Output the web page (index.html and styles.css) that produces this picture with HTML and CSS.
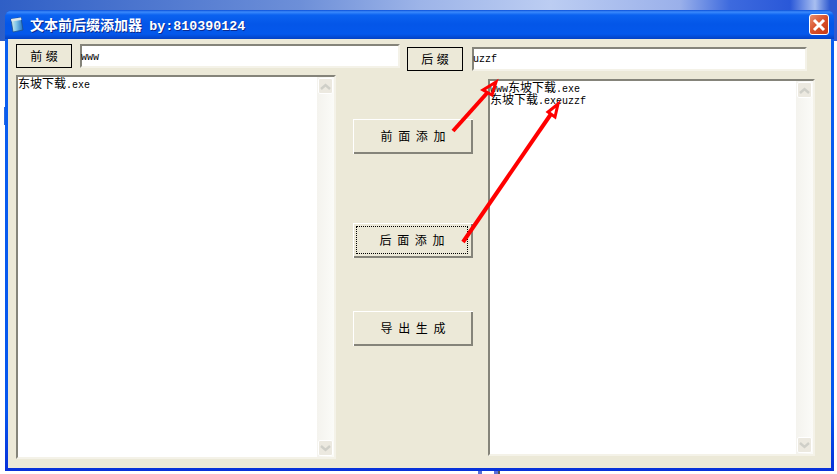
FILE: index.html
```html
<!DOCTYPE html>
<html lang="zh">
<head>
    <meta charset="UTF-8">
    <title>文本前后缀添加器</title>
    <link rel="stylesheet" href="styles.css">
</head>
<body>
    <!-- bits of the desktop showing round the window -->
    <div class="bit bit-left"></div>
    <div class="bit bit-bottom-a"></div>
    <div class="bit bit-bottom-b"></div>

    <div class="window">
        <div class="titlebar">
            <svg class="app-icon" width="16" height="17" viewBox="0 0 16 17">
                <defs>
                    <linearGradient id="page" x1="0" y1="0" x2="1" y2="0">
                        <stop offset="0" stop-color="#d8efe8"/>
                        <stop offset="0.45" stop-color="#7fc4e8"/>
                        <stop offset="1" stop-color="#1f6fc0"/>
                    </linearGradient>
                </defs>
                <path d="M2 3 L12 1.5 L14 14 L4 16 Z" fill="url(#page)" stroke="#1d4f90" stroke-width="0.8"/>
                <path d="M2 3 L12 1.5 L12.4 4 L2.5 5.5 Z" fill="#dfe6ea"/>
            </svg>
            <span class="title-text">文本前后缀添加器 <span class="title-by">by:810390124</span></span>
            <div class="close-btn">
                <svg width="14" height="14" viewBox="0 0 14 14">
                    <path d="M2 2 L12 12 M12 2 L2 12" stroke="#fff" stroke-width="3"/>
                </svg>
            </div>
        </div>
        <div class="client">
            <div class="top-row">
                <div class="field-left">
                    <button class="label-btn">前 缀</button>
                    <div class="input-box">www</div>
                </div>
                <div class="field-right">
                    <button class="label-btn">后 缀</button>
                    <div class="input-box">uzzf</div>
                </div>
            </div>
            <div class="main-row">
                <div class="memo memo-left">
                    <div class="memo-text">东坡下载<span class="latin">.exe</span></div>
                    <div class="scrollbar">
                        <div class="scroll-btn"><svg width="11" height="7" viewBox="0 0 11 7"><path d="M1 6 L5.5 2 L10 6" fill="none" stroke="#cfcfc8" stroke-width="2.4"/></svg></div>
                        <div class="scroll-btn"><svg width="11" height="7" viewBox="0 0 11 7"><path d="M1 1 L5.5 5 L10 1" fill="none" stroke="#cfcfc8" stroke-width="2.4"/></svg></div>
                    </div>
                </div>
                <div class="actions">
                    <button class="action-btn">前 面 添 加</button>
                    <button class="action-btn focused"><span class="focus-ring">后 面 添 加</span></button>
                    <button class="action-btn">导 出 生 成</button>
                </div>
                <div class="memo memo-right">
                    <div class="memo-text"><span class="latin">www</span>东坡下载<span class="latin">.exe</span><br>东坡下载<span class="latin">.exeuzzf</span></div>
                    <div class="scrollbar">
                        <div class="scroll-btn"><svg width="11" height="7" viewBox="0 0 11 7"><path d="M1 6 L5.5 2 L10 6" fill="none" stroke="#cfcfc8" stroke-width="2.4"/></svg></div>
                        <div class="scroll-btn"><svg width="11" height="7" viewBox="0 0 11 7"><path d="M1 1 L5.5 5 L10 1" fill="none" stroke="#cfcfc8" stroke-width="2.4"/></svg></div>
                    </div>
                </div>
            </div>
        </div>
    </div>

    <!-- red arrows drawn over the window -->
    <svg class="arrows" width="837" height="474" viewBox="0 0 837 474">
        <path d="M453 131 L488 92" stroke="#f00" stroke-width="4" fill="none"/>
        <path d="M496 82 L483 90 L492 95 Z" fill="none" stroke="#f00" stroke-width="3"/>
        <path d="M463 242 L551 114" stroke="#f00" stroke-width="4" fill="none"/>
        <path d="M558 104 L548 112 L555 117 Z" fill="none" stroke="#f00" stroke-width="3"/>
    </svg>
</body>
</html>
```

FILE: styles.css
```css
html, body {
    margin: 0;
    height: 100%;
}
body {
    width: 837px;
    height: 474px;
    overflow: hidden;
    position: relative;
    background: linear-gradient(to right, #2f5fc6 0, #6d8fd8 300px, #9db4e8 420px, #bccdf2 550px, #9ab0ea 680px, #3d6ade 730px, #2a58d8 790px, #a9bff0 815px, #2f5ad0 830px) 0 0 / 100% 41px no-repeat, #fff;
    font-family: "Liberation Mono", "Noto Sans CJK SC", monospace;
}
.bit {
    position: absolute;
}
.bit-left {
    left: 4px;
    top: 107px;
    width: 1px;
    height: 18px;
    background: #2a6ae0;
}
.bit-bottom-a {
    left: 478px;
    top: 471px;
    width: 4px;
    height: 3px;
    background: #5b70d8;
}
.bit-bottom-b {
    left: 494px;
    top: 471px;
    width: 4px;
    height: 3px;
    background: #5b70d8;
    border-right: 2px solid #555;
}
.window {
    position: absolute;
    left: 5px;
    top: 10px;
    width: 829px;
    height: 461px;
    display: flex;
    flex-direction: column;
    border-radius: 8px 8px 0 0;
    box-sizing: border-box;
    padding: 0 3px 3px;
    background: linear-gradient(to bottom, #0a5ff0, #0556ee 400px, #0831d9);
}
.titlebar {
    height: 29px;
    margin: 0 -3px;
    padding: 0 5px 0 4px;
    display: flex;
    align-items: center;
    border-radius: 8px 8px 0 0;
    background: linear-gradient(to bottom, #0a4fd8 0, #3b8afc 2px, #0a62f0 5px, #0456e8 14px, #0458ec 24px, #0441c4 29px);
}
.app-icon {
    margin-right: 5px;
}
.title-text {
    flex: 1;
    color: #fff;
    font-weight: bold;
    font-size: 14px;
    padding-bottom: 2px;
    text-shadow: 1px 1px 0 #0a2a90;
    font-family: "Noto Sans CJK SC", sans-serif;
    white-space: pre;
}
.title-by {
    font-family: "Liberation Mono", monospace;
    font-size: 13.33px;
    margin-left: 4px;
}
.close-btn {
    width: 20px;
    height: 21px;
    box-sizing: border-box;
    border: 1px solid #fff;
    border-radius: 3px;
    background: linear-gradient(135deg, #ea9070, #d8502a 50%, #c83a14);
    display: flex;
    align-items: center;
    justify-content: center;
}
.client {
    flex: 1;
    background: #ece9d8;
    display: flex;
    flex-direction: column;
    padding: 5px 14px 8px 8px;
    min-height: 0;
}
.top-row {
    display: flex;
    height: 28px;
}
.field-left {
    display: flex;
    gap: 8px;
    width: 391px;
}
.field-right {
    display: flex;
    gap: 9px;
    margin-top: 3px;
}
.label-btn {
    width: 56px;
    height: 24px;
    padding: 0 0 2px;
    background: #ece9d8;
    border: 1px solid #000;
    font-family: "Noto Sans CJK SC", sans-serif;
    font-size: 12px;
    word-spacing: 1px;
    color: #000;
}
.input-box {
    box-sizing: border-box;
    height: 24px;
    line-height: 22px;
    font-size: 10px;
    background: #fff;
    border-top: 2px solid #85847a;
    border-left: 2px solid #85847a;
    border-right: 2px solid #f4f2e8;
    border-bottom: 2px solid #f4f2e8;
    text-indent: -1px;
    color: #000;
}
.field-left .input-box {
    width: 320px;
    line-height: 24px;
}
.field-right .input-box {
    width: 335px;
}
.main-row {
    flex: 1;
    display: flex;
    min-height: 0;
    margin-top: 3px;
}
.memo {
    box-sizing: border-box;
    display: flex;
    background: #fff;
    border-top: 2px solid #85847a;
    border-left: 2px solid #85847a;
    border-right: 2px solid #f4f2e8;
    border-bottom: 2px solid #f4f2e8;
}
.memo-left {
    width: 320px;
    height: 384px;
}
.memo-right {
    width: 327px;
    height: 377px;
    margin-top: 4px;
}
.memo-text {
    flex: 1;
    font-family: "Noto Sans CJK SC", sans-serif;
    font-size: 12px;
    line-height: 12px;
    color: #000;
}
.latin {
    font-family: "Liberation Mono", monospace;
    font-size: 10px;
    line-height: 0;
}
.scrollbar {
    width: 17px;
    display: flex;
    flex-direction: column;
    justify-content: space-between;
    background: linear-gradient(to right, #f4f3ee, #fbfbf8);
}
.scroll-btn {
    width: 15px;
    height: 16px;
    margin: 1px;
    box-sizing: border-box;
    border: 1px solid #fff;
    border-radius: 2px;
    background: #ece9e0;
    display: flex;
    align-items: center;
    justify-content: center;
}
.actions {
    width: 152px;
    margin-top: 44px;
    padding-left: 17px;
    box-sizing: border-box;
    display: flex;
    flex-direction: column;
}
.action-btn {
    width: 120px;
    height: 35px;
    padding: 0 0 2px;
    background: #ece9d8;
    border: none;
    box-shadow: inset 1px 1px 0 #fff, inset -2px -2px 0 #85847a;
    font-family: "Noto Sans CJK SC", sans-serif;
    font-size: 12px;
    word-spacing: 3px;
    color: #000;
    margin-bottom: 69px;
}
.action-btn.focused {
    margin-bottom: 53px;
    padding: 3px 5px 4px 3px;
}
.focus-ring {
    display: flex;
    align-items: center;
    justify-content: center;
    height: 100%;
    padding-bottom: 2px;
    border: 1px dotted #000;
    box-sizing: border-box;
}
.arrows {
    position: absolute;
    left: 0;
    top: 0;
    pointer-events: none;
}
```
